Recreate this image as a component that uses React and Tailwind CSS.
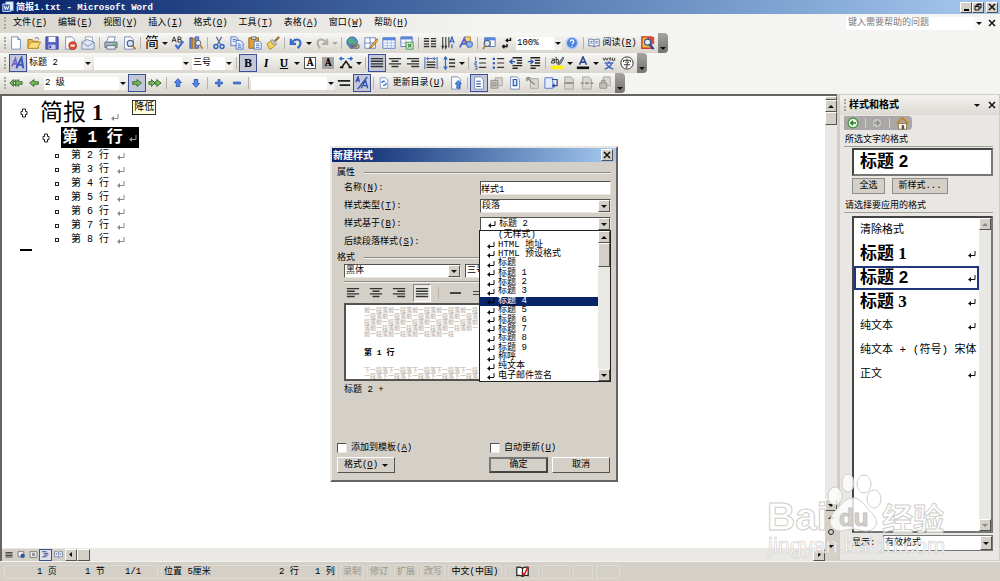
import { useState } from 'react';

const ui = "font-['Liberation_Mono','Noto_Sans_CJK_SC',monospace]";

const raised = 'border border-t-white border-l-white border-r-[#55534f] border-b-[#55534f] bg-[#d4d0c8]';
const sunken = 'border border-t-[#55534f] border-l-[#55534f] border-r-[#e8e6e0] border-b-[#e8e6e0] bg-white';

const page = <path d="M3 1h7l3 3v11H3z" fill="#fff" stroke="#6d86b8" />;
const grayPage = <path d="M3 1h7l3 3v11H3z" fill="#d8d6d0" stroke="#a5a29a" />;

const icons = {
  word: (
    <>
      <path d="M5 1h10v12H5z" fill="#e8f0fc" stroke="#7f9fd4" />
      <path d="M1 4h10v10H1z" fill="#2b5fb8" stroke="#fff" />
      <path d="M3 6.500l1.500 5 1.500-4 1.500 4 1.500-5" fill="none" stroke="#fff" strokeWidth="1.300" />
    </>
  ),
  blank: <>{page}<path d="M10 1v3h3" fill="#c3d2ee" stroke="#6d86b8" /></>,
  open: (
    <>
      <path d="M1 4h5l1 2h6v8H1z" fill="#e9b543" stroke="#a9781c" />
      <path d="M4 7h11.500L12 14H1z" fill="#fbdc7c" stroke="#b88a28" />
      <path d="M9 3c2-2 4-1 4.500 1" fill="none" stroke="#555" />
    </>
  ),
  save: (
    <>
      <path d="M1 1h14v14H1z" fill="#5460c8" stroke="#343c90" />
      <path d="M4 1h8v6H4z" fill="#f4f6fd" />
      <path d="M4 10h8v5H4z" fill="#c9cdec" />
      <path d="M5 11h2v3H5z" fill="#343c90" />
    </>
  ),
  permission: (
    <>
      {page}
      <circle cx="11" cy="11" r="4.500" fill="#e0513a" stroke="#b03020" />
      <path d="M8.500 11h5" stroke="#fff" strokeWidth="2" />
    </>
  ),
  mail: (
    <>
      <path d="M5 1h8v8H5z" fill="#fff" stroke="#8fa0c0" />
      <path d="M1 7l6-3 8 3v8H1z" fill="#dfe7f5" stroke="#7387b0" />
      <path d="M1 7l7 5 7-5" fill="none" stroke="#7387b0" />
    </>
  ),
  print: (
    <>
      <path d="M5 1h8l-2 6H3z" fill="#fff" stroke="#6d86b8" />
      <path d="M1 7h14v6H1z" fill="#a9b4c4" stroke="#5d6b80" />
      <path d="M3 11h10v4H3z" fill="#e9edf4" stroke="#5d6b80" />
      <path d="M10 9h4v2h-4z" fill="#3cc23c" />
    </>
  ),
  preview: (
    <>
      {page}
      <circle cx="9.500" cy="8.500" r="3.500" fill="#d5e6fb" stroke="#56657c" strokeWidth="1.400" />
      <path d="M12 11l3.500 4" stroke="#b98234" strokeWidth="2" />
    </>
  ),
  spell: (
    <>
      <path d="M1 7l2.500-6L6 7M2 5h3M8 1v6h2q2 0 2-1.500T10 4H8h2q1.500 0 1.500-1.500T10 1z" fill="none" stroke="#222" />
      <path d="M5 10l3 4 6-8" fill="none" stroke="#3d6fd6" strokeWidth="2.400" />
    </>
  ),
  research: (
    <>
      <path d="M1 2h3v12H1z" fill="#6d83d0" stroke="#44559c" />
      <path d="M4 3h3v11H4z" fill="#e2a950" stroke="#a87725" />
      <path d="M7 1h4v13H7z" fill="#7a9ce0" stroke="#44559c" />
      <circle cx="10.500" cy="8" r="3" fill="#e6f0fc" stroke="#555" />
      <path d="M12.500 10l3 4.500" stroke="#b98234" strokeWidth="2" />
    </>
  ),
  cut: (
    <>
      <path d="M5 1l5 9M11 1L6 10" stroke="#5c7292" strokeWidth="1.500" />
      <circle cx="4.500" cy="12" r="2.200" fill="none" stroke="#2f62c4" strokeWidth="1.700" />
      <circle cx="11.500" cy="12" r="2.200" fill="none" stroke="#2f62c4" strokeWidth="1.700" />
    </>
  ),
  copy: (
    <>
      <path d="M1 1h6l2 2v8H1z" fill="#e5edfc" stroke="#4a6ec0" />
      <path d="M7 5h5l3 3v7H7z" fill="#e5edfc" stroke="#4a6ec0" />
      <path d="M3 4h4M3 6h3M9 9h3M9 11h4M9 13h4" stroke="#4a6ec0" />
    </>
  ),
  paste: (
    <>
      <path d="M1 2h11v12H1z" fill="#e0a23c" stroke="#8e5e12" />
      <path d="M4 1h5v3H4z" fill="#ddd" stroke="#666" />
      <path d="M7 6h6l2 2v7H7z" fill="#fff" stroke="#4a6ec0" />
      <path d="M9 9h4M9 11h4M9 13h4" stroke="#4a6ec0" />
    </>
  ),
  brush: (
    <>
      <path d="M15 1l-5 5" stroke="#a0703a" strokeWidth="2.500" />
      <path d="M7 4l5 5-2 2-5-5z" fill="#ccd" stroke="#777" />
      <path d="M5 6l5 5q-3 4-6 4L1 9z" fill="#f1d25c" stroke="#a58a20" />
    </>
  ),
  undo: <path d="M2 3v6h6M3 8q4-6 9-3 3 4-2 9" fill="none" stroke="#3566cc" strokeWidth="2.300" />,
  redo: <path d="M14 3v6H8M13 8Q9 2 4 5q-3 4 2 9" fill="none" stroke="#b1afa9" strokeWidth="2.300" />,
  link: (
    <>
      <circle cx="7" cy="7" r="6" fill="#4d8fe0" stroke="#2b5ea8" />
      <path d="M3 4q3-3 5 0t-2 4-3 0zM9 7l3-1v4l-3 1z" fill="#5ab552" />
      <path d="M6 12h3m1 0h3" stroke="#555" strokeWidth="1" />
      <rect x="4" y="10" width="6" height="4" rx="2" fill="none" stroke="#777" strokeWidth="1.500" />
      <rect x="9" y="10" width="6" height="4" rx="2" fill="none" stroke="#777" strokeWidth="1.500" />
    </>
  ),
  borders: (
    <>
      <path d="M1 2h12v12H1zM1 8h12M7 2v12" fill="#fff" stroke="#5c7dc0" />
      <path d="M15 3l-7 8-2 3 3-1 7-8z" fill="#eeb448" stroke="#9a6b1a" />
    </>
  ),
  table: (
    <>
      <path d="M1 2h14v12H1z" fill="#fff" stroke="#4a70c4" />
      <path d="M1 2h14v3H1z" fill="#5b86dc" />
      <path d="M1 8h14M1 11h14M6 5v9M10.500 5v9" stroke="#9fb6e4" />
    </>
  ),
  excel: (
    <>
      <path d="M1 1h13v11H1z" fill="#fff" stroke="#4a70c4" />
      <path d="M1 1h13v3H1z" fill="#5b86dc" />
      <path d="M1 8h13M6 4v8" stroke="#9fb6e4" />
      <path d="M7 7h8v8H7z" fill="#e6f5e2" stroke="#3b8c3b" />
      <path d="M9 9l4 4M13 9l-4 4" stroke="#2f8a2f" strokeWidth="1.600" />
    </>
  ),
  columns: <path d="M1 3h6M1 6h6M1 9h6M1 12h6M9 3h6M9 6h6M9 9h6M9 12h6" stroke="#333" strokeWidth="1.600" />,
  textdir: (
    <>
      <path d="M2 1v12M5.500 1v12M9 1v12M1 11l1 3 1-3M4.500 11l1 3 1-3" stroke="#333" strokeWidth="1.200" fill="none" />
      <path d="M10 8l2.500-7L15 8M11 6h3M12.500 9v5" fill="none" stroke="#2f5cb8" strokeWidth="1.300" />
    </>
  ),
  drawing: (
    <>
      <path d="M6 1h7v6H6z" fill="#f5d478" stroke="#a8822c" />
      <path d="M1 13L6 3l5 10M3 9h6" fill="none" stroke="#5a63c8" strokeWidth="2.200" />
      <circle cx="12" cy="9.500" r="3.500" fill="#8fb0ee" stroke="#3f63b0" />
    </>
  ),
  docmap: (
    <>
      <path d="M3 2h12v10H3z" fill="#fff" stroke="#4a70c4" />
      <path d="M3 2h12v3H3z" fill="#5b86dc" />
      <circle cx="6" cy="8.500" r="3.500" fill="#d5e6fb" stroke="#56657c" strokeWidth="1.400" />
      <path d="M4 11l-3 4" stroke="#b98234" strokeWidth="2" />
    </>
  ),
  marks: <path d="M12 2v3H8M9 3L7 5l2 2M8 9v3H4M5 10l-2 2 2 2" fill="none" stroke="#111" strokeWidth="1.600" />,
  help: (
    <>
      <circle cx="8" cy="8" r="6.500" fill="#4b83e0" stroke="#b7cdf5" strokeWidth="1.500" />
      <path d="M6 6.500Q6 4.500 8 4.500t2 2Q10 8 8 9M8 11v1.300" fill="none" stroke="#fff" strokeWidth="1.600" />
    </>
  ),
  book: <path d="M8 4Q5 2 1 3v9q4-1 7 1 3-2 7-1V3q-4-1-7 1v9M3 6h3M3 8h3M10 6h3M10 8h3" fill="#eef3fd" stroke="#4b5f8c" />,
  lookup: (
    <>
      <path d="M1 1h11v13H1z" fill="#f0c23a" stroke="#d0392b" strokeWidth="1.600" />
      <path d="M7 1h8v8H7z" fill="#d94a3e" />
      <circle cx="7.500" cy="7" r="3.500" fill="#e4effc" stroke="#37558f" strokeWidth="1.300" />
      <path d="M10 10l4.500 5" stroke="#2746a0" strokeWidth="2.500" />
    </>
  ),
  styles: (
    <>
      <path d="M1 12L5 3l2 9M3 9h4" fill="none" stroke="#7160c4" strokeWidth="1.800" />
      <path d="M6 14l6-12 2 12M8 10h6" fill="none" stroke="#3a57b8" strokeWidth="2.200" />
    </>
  ),
  scale: (
    <>
      <path d="M3 13l5-7 5 7M1 13h4M11 13h4" fill="none" stroke="#111" strokeWidth="1.800" />
      <path d="M1 3h5M10 3h5M3 1L1 3l2 2M13 1l2 2-2 2" fill="none" stroke="#2c6ad0" strokeWidth="1.500" />
    </>
  ),
  justify: <path d="M1 3h14M1 6h14M1 9h14M1 12h14" stroke="#333" strokeWidth="1.700" />,
  left: <path d="M1 3h14M1 6h9M1 9h14M1 12h9" stroke="#333" strokeWidth="1.700" />,
  center: <path d="M1 3h14M4 6h8M1 9h14M4 12h8" stroke="#333" strokeWidth="1.700" />,
  right: <path d="M1 3h14M6 6h9M1 9h14M6 12h9" stroke="#333" strokeWidth="1.700" />,
  distribute: (
    <>
      <path d="M3 7h10M3 10h10M3 13h10" stroke="#333" strokeWidth="1.700" />
      <path d="M1 1v14M15 1v14M3 3h10M5 1L3 3l2 2M11 1l2 2-2 2" fill="none" stroke="#2c58b8" />
    </>
  ),
  spacing: (
    <>
      <path d="M8 4h7M8 8h7M8 12h7" stroke="#333" strokeWidth="1.600" />
      <path d="M4 2v12M2 4l2-3 2 3M2 12l2 3 2-3" fill="none" stroke="#2c6ad0" strokeWidth="1.400" />
    </>
  ),
  numbers: (
    <>
      <path d="M7 3h8M7 8h8M7 13h8" stroke="#333" strokeWidth="1.400" />
      <path d="M3 1v4M2 6.500h2v1.500H2v2h2.500M2 12h2.500v3H2" fill="none" stroke="#2c58b8" />
    </>
  ),
  bullets: (
    <>
      <path d="M7 3h8M7 8h8M7 13h8" stroke="#333" strokeWidth="1.400" />
      <path d="M2 2h2.500v2.500H2zM2 7h2.500v2.500H2zM2 12h2.500v2.500H2z" fill="#2c58b8" />
    </>
  ),
  outdent: (
    <>
      <path d="M4 2h11M9 5h6M9 8h6M4 11h11M4 14h6" stroke="#222" strokeWidth="1.600" />
      <path d="M7 6.500H1M4 4L1 6.500 4 9" fill="none" stroke="#2c58b8" strokeWidth="1.500" />
    </>
  ),
  indent: (
    <>
      <path d="M4 2h11M9 5h6M9 8h6M4 11h11M4 14h6" stroke="#222" strokeWidth="1.600" />
      <path d="M1 6.500h6M4 4l3 2.500L4 9" fill="none" stroke="#2c58b8" strokeWidth="1.500" />
    </>
  ),
  highlight: (
    <>
      <path d="M1 11h14v4H1z" fill="#fff200" />
      <path d="M5 5H2.500L1.500 8H5V3.500H2M7 1v7h2.500V4H7" fill="none" stroke="#222" />
      <path d="M15 1l-5 7-1 2 3-1 4-7z" fill="#7b9be0" stroke="#555" />
    </>
  ),
  fontcolor: (
    <>
      <path d="M1 12h14v3H1z" fill="#111" />
      <path d="M4 10l4-9 4 9M5.500 7h5" fill="none" stroke="#2d4a94" strokeWidth="1.800" />
    </>
  ),
  pinyin: (
    <>
      <path d="M1 2l1.500 3L4 2l1.500 3L7 2M9 5q-2-3 1-3v3M12 2v3h2.500V2" fill="none" stroke="#333" />
      <path d="M3 8h10M8 6v2M5 9q2 4 8 6M11 9q-2 4-8 6" fill="none" stroke="#3f63c0" strokeWidth="1.500" />
    </>
  ),
  circled: (
    <>
      <circle cx="8" cy="8" r="7" fill="#fff" stroke="#222" />
      <path d="M4 5h8M4 5v2M12 5v2M8 3v2M6 7h4L8 9v4H6.500M4.500 10h7" fill="none" stroke="#222" />
    </>
  ),
  promote2: <path d="M1 8l4-4v2.500h3V4L4.500 8 8 12V9.500H5V12zM7 8l4-4v2.500h4v3h-4V12z" fill="#7cb85c" stroke="#2f6a2a" />,
  promote: <path d="M3 8l5-4v2.500h5v3H8V12z" fill="#7cb85c" stroke="#2f6a2a" />,
  demote: <path d="M13 8L8 4v2.500H3v3h5V12z" fill="#7cb85c" stroke="#2f6a2a" />,
  body: <path d="M1 6.500h3V4l4 4-4 4V9.500H1zM8 6.500h2V4l5 4-5 4V9.500H8z" fill="#7cb85c" stroke="#2f6a2a" />,
  up: <path d="M8 3L4 7.500h2V12h4V7.500h2z" fill="#4f88ee" stroke="#2857b4" />,
  down: <path d="M8 13L4 8.500h2V4h4v4.500h2z" fill="#4f88ee" stroke="#2857b4" />,
  plus: <path d="M7 4h2v3h3v2H9v3H7V9H4V7h3z" fill="#4f88ee" stroke="#2857b4" />,
  minus: <path d="M4 7h8v2H4z" fill="#4f88ee" stroke="#2857b4" />,
  firstline: <path d="M1 5.500h14M3 10.500h12" stroke="#222" strokeWidth="2" />,
  showformat: <path d="M1 7l2.500-6L5 7M2 5h3M14 1L3 15M7 14l5-9 2.500 9M9 11h5" fill="none" stroke="#2f4ca8" strokeWidth="1.500" />,
  refresh: <>{page}<path d="M5 8q1-3 4-2M11 8q-1 4-4 3" fill="none" stroke="#2c6ad0" strokeWidth="1.800" /></>,
  gototoc: <>{page}<path d="M9 14V9H7l3.500-4L14 9h-2v5z" fill="#5a90ee" stroke="#2857b4" /></>,
  master: <>{page}<path d="M5 6h5M5 9h5M5 12h5" stroke="#2c58b8" strokeWidth="1.400" /></>,
  collapse: <><path d="M6 2h8v9H6z" fill="#d8d6d0" stroke="#a5a29a" /><path d="M1 5h8v9H1zM3 8h4v3H3z" fill="#c4c1ba" stroke="#908d86" /></>,
  subdoc: <>{page}<path d="M6 4h4v7H6z" fill="#d6e4fb" stroke="#2c58b8" strokeWidth="1.400" /></>,
  remove: <><path d="M5 3h9v11H5z" fill="#d8d6d0" stroke="#a5a29a" /><path d="M1 2l9 8M1 2v4M1 2h4" stroke="#908d86" strokeWidth="1.600" /></>,
  insertdoc: <><path d="M1 2h9v12H1z" fill="#e5edfc" stroke="#4a6ec0" /><path d="M9 4h6v7h-4M12 9l-2 2 2 2" fill="none" stroke="#2b4da0" strokeWidth="1.400" /></>,
  merge: <>{grayPage}<path d="M3 8h10" stroke="#908d86" strokeWidth="2" /></>,
  split: <>{grayPage}<path d="M1 8h3M6 8h4M12 8h3" stroke="#908d86" strokeWidth="2" /></>,
  lock: <><path d="M6 1h8v10H6z" fill="#d8d6d0" stroke="#a5a29a" /><path d="M2 8h8v6H2zM4 8V5h4v3" fill="#c4c1ba" stroke="#908d86" /></>,
  spellcheck: (
    <>
      <path d="M8 4Q5 2 1 3v10q4-1 7 1 3-2 7-1V3q-4-1-7 1v10" fill="#fff" stroke="#222" strokeWidth="1.500" />
      <path d="M7 9l3 3 5-10" fill="none" stroke="#d01818" strokeWidth="2" />
    </>
  ),
  back: <><circle cx="8" cy="8" r="6.500" fill="#e9f7e4" stroke="#3a8a34" strokeWidth="1.500" /><path d="M12 8H5M8 5L5 8l3 3" fill="none" stroke="#2c7a28" strokeWidth="2" /></>,
  forward: <><circle cx="8" cy="8" r="6.500" fill="#c5c4c0" stroke="#9a9994" /><path d="M4 8h7M8 5l3 3-3 3" fill="none" stroke="#8d8c88" strokeWidth="1.800" /></>,
  home: (
    <>
      <path d="M3 8h10v7H3z" fill="#fffbe8" stroke="#7a6a4a" />
      <path d="M1 8l7-7 7 7" fill="none" stroke="#c88422" strokeWidth="2.200" />
      <path d="M7 10h3v5H7z" fill="#6a5238" />
    </>
  ),
  viewWeb: <><path d="M2 3h10v9H2z" fill="#fff" stroke="#333" /><circle cx="10" cy="10" r="4" fill="#2f5a96" /></>,
  viewPrint: <path d="M2 3h12v10H2zM5 6h6M5 8h6M5 10h6" fill="#fff" stroke="#333" />,
  viewOutline: <path d="M2 3h8M5 6h8M5 9h8M2 12h8" stroke="#2b3e7a" strokeWidth="1.500" />,
};

function Icon({ name, size = 14 }) {
  return (
    <svg width={size} height={size} viewBox="0 0 16 16" className="shrink-0" aria-hidden="true">
      {icons[name]}
    </svg>
  );
}

function Caret({ dir = 'down', color = '#111' }) {
  const shapes = { down: 'M0 1h6L3 4z', up: 'M0 4h6L3 1z', left: 'M4 0v5L1 2.500z', right: 'M2 0v5l3-2.500z' };
  return (
    <svg width="6" height="5" viewBox="0 0 6 5" className="shrink-0" aria-hidden="true">
      <path d={shapes[dir]} fill={color} />
    </svg>
  );
}

function Return({ color = '#111' }) {
  return (
    <svg width="8" height="8" viewBox="0 0 8 8" className="shrink-0" aria-hidden="true">
      <path d="M7 1v4.500H2" fill="none" stroke={color} />
      <path d="M0 5.500L3 3v5z" fill={color} />
    </svg>
  );
}

function Cross() {
  return (
    <svg width="8" height="8" viewBox="0 0 8 8" aria-hidden="true">
      <path d="M1 1l6 6M7 1L1 7" stroke="#111" strokeWidth="1.500" />
    </svg>
  );
}

function Tool({ name, label, active, children }) {
  return (
    <button
      aria-label={label || name}
      className={`flex h-[18px] w-[18px] shrink-0 items-center justify-center ${active ? 'border border-[#3a4f94] bg-[#c3c7d8]' : ''}`}
    >
      {children || <Icon name={name} />}
    </button>
  );
}

function More({ color }) {
  return (
    <button aria-label="更多" className="flex w-2 shrink-0 items-center justify-center">
      <Caret color={color} />
    </button>
  );
}

function Sep() {
  return <span className="mx-[2px] h-3 w-px shrink-0 bg-[#b5b2aa]" />;
}

function Grip() {
  return <span className="mr-px ml-1 h-3 w-[2px] shrink-0 border-l-2 border-dotted border-[#a9a69e]" />;
}

function Tools({ names }) {
  return names.map((n) => <Tool key={n} name={n} />);
}

function Combo({ label, value, className, flat = true }) {
  return (
    <span className={`flex shrink-0 items-center bg-white ${className}`}>
      <select aria-label={label} defaultValue={value} className="h-full min-w-0 flex-1 appearance-none pl-px outline-none">
        <option>{value}</option>
      </select>
      <span className={`pointer-events-none flex h-full items-center justify-center ${flat ? 'w-2 bg-[#f0efec]' : `w-3 ${raised}`}`}>
        <Caret />
      </span>
    </span>
  );
}

function Toolbar({ label, children }) {
  return (
    <div role="toolbar" aria-label={label} className="flex h-5 w-fit items-center rounded-r-sm bg-linear-to-b from-[#f8f8f6] to-[#d9d6ce]">
      {children}
      <button aria-label="工具栏选项" className="ml-px flex h-5 w-[10px] shrink-0 items-end justify-center rounded-r-sm bg-linear-to-b from-[#a5a4a1] to-[#757470] pb-[2px]">
        <Caret />
      </button>
    </div>
  );
}

function Key({ children, k, end = '' }) {
  return <span>{children}(<u>{k}</u>){end}</span>;
}

const menus = [
  ['文件', 'F'], ['编辑', 'E'], ['视图', 'V'], ['插入', 'I'], ['格式', 'O'],
  ['工具', 'T'], ['表格', 'A'], ['窗口', 'W'], ['帮助', 'H'],
];

function TitleBar() {
  return (
    <header className="flex h-[14px] shrink-0 items-center bg-linear-to-r from-[#0a246a] to-[#a6caf0] pr-[2px] pl-[2px]">
      <Icon name="word" size={12} />
      <h1 className="ml-[2px] flex-1 pt-[2px] text-[9px] leading-3 font-bold text-white">简报1.txt - Microsoft Word</h1>
      <button aria-label="最小化" className={`flex h-[11px] w-3 items-end justify-center pb-px ${raised}`}>
        <span className="h-[2px] w-[5px] bg-black" />
      </button>
      <button aria-label="还原" className={`flex h-[11px] w-3 items-center justify-center ${raised}`}>
        <svg width="8" height="8" viewBox="0 0 8 8"><path d="M3 3V1h4v4H5M1 3h4v4H1zM1 3.500h4M3 1.500h4" fill="none" stroke="#111" /></svg>
      </button>
      <button aria-label="关闭" className={`ml-[2px] flex h-[11px] w-3 items-center justify-center ${raised}`}><Cross /></button>
    </header>
  );
}

function MenuBar() {
  return (
    <nav className="flex h-[18px] items-center">
      <Grip />
      <div className="flex w-[412px] shrink-0 pl-[6px]">
        {menus.map(([name, k]) => (
          <button key={k} className="flex-1 text-left whitespace-nowrap"><Key k={k}>{name}</Key></button>
        ))}
      </div>
      <span className="flex-1" />
      <input aria-label="键入需要帮助的问题" placeholder="键入需要帮助的问题" className="h-[13px] w-[128px] bg-white pl-[2px] placeholder:text-[#777]" />
      <span className="flex h-[13px] w-[10px] items-center justify-center bg-[#f8f8f7]"><Caret /></span>
      <button aria-label="关闭窗口" className="mr-1 ml-1"><Cross /></button>
    </nav>
  );
}

function Toolbars() {
  return (
    <div className="flex flex-col items-start pt-px pb-px">
      <Toolbar label="常用">
        <Grip />
        <Tools names={['blank', 'open', 'save', 'permission', 'mail']} />
        <Sep />
        <Tools names={['print', 'preview']} />
        <Sep />
        <Tool label="中文简繁转换"><span className="text-[14px] leading-4">简</span></Tool>
        <More />
        <Tools names={['spell', 'research']} />
        <Sep />
        <Tools names={['cut', 'copy', 'paste', 'brush']} />
        <Sep />
        <Tool name="undo" />
        <More />
        <Tool name="redo" />
        <More color="#aaa" />
        <Sep />
        <Tools names={['link', 'borders', 'table', 'excel']} />
        <Sep />
        <Tools names={['columns', 'textdir', 'drawing']} />
        <Sep />
        <Tools names={['docmap', 'marks']} />
        <Combo label="显示比例" value="100%" className="mr-px h-[13px] w-[46px]" />
        <Tool name="help" />
        <Sep />
        <button className="flex w-[53px] items-center justify-center gap-[2px]">
          <Icon name="book" size={12} /><Key k="R">阅读</Key>
        </button>
        <Tool name="lookup" />
      </Toolbar>

      <Toolbar label="格式">
        <Grip />
        <span className="w-[2px]" />
        <Tool name="styles" active />
        <Combo label="样式" value="标题 2" className="mx-px h-[13px] w-[64px]" />
        <Combo label="字体" value="" className="mx-px h-[13px] w-[96px]" />
        <Combo label="字号" value="三号" className="mx-px h-[13px] w-[41px]" />
        <Sep />
        <Tool label="加粗" active><b className="font-serif text-[12px]">B</b></Tool>
        <Tool label="倾斜"><i className="font-serif text-[12px] font-bold">I</i></Tool>
        <Tool label="下划线"><u className="font-serif text-[12px] font-bold">U</u></Tool>
        <More />
        <Tool label="字符边框"><b className="h-3 border border-[#555] bg-white px-px font-serif text-[11px] leading-[10px]">A</b></Tool>
        <Tool label="字符底纹"><b className="h-3 bg-[#a7a6a3] px-[2px] font-serif text-[11px] leading-3">A</b></Tool>
        <Tool name="scale" />
        <More />
        <Sep />
        <Tool name="justify" active />
        <Tools names={['center', 'right', 'distribute', 'spacing']} />
        <More />
        <Sep />
        <Tools names={['numbers', 'bullets', 'outdent', 'indent']} />
        <Sep />
        <Tool name="highlight" />
        <More />
        <Tool name="fontcolor" />
        <More />
        <Tools names={['pinyin', 'circled']} />
      </Toolbar>

      <Toolbar label="大纲">
        <Grip />
        <Tools names={['promote2', 'promote']} />
        <Combo label="大纲级别" value="2 级" className="mx-px h-[13px] w-[83px]" />
        <Tool name="demote" active />
        <Tool name="body" />
        <Sep />
        <Tools names={['up', 'down']} />
        <Sep />
        <Tools names={['plus', 'minus']} />
        <Sep />
        <Combo label="显示级别" value="" className="h-[13px] w-[84px]" />
        <Tool name="firstline" />
        <Tool name="showformat" active />
        <Sep />
        <button className="flex w-[71px] items-center justify-center gap-[2px]">
          <Icon name="refresh" size={12} /><Key k="U">更新目录</Key>
        </button>
        <Tool name="gototoc" />
        <Sep />
        <Tool name="master" active />
        <Tools names={['collapse', 'subdoc', 'remove', 'insertdoc', 'merge', 'split', 'lock']} />
      </Toolbar>
    </div>
  );
}

function OutlineMark() {
  return (
    <svg width="8" height="10" viewBox="0 0 8 10" className="shrink-0" aria-hidden="true">
      <path d="M2.500 1h3v2.500H7v3H5.500V9h-3V6.500H1v-3h1.500z" fill="#fff" stroke="#222" />
    </svg>
  );
}

function Document() {
  return (
    <article className="min-h-0 flex-1 overflow-hidden bg-white pt-[3px] pl-[18px]">
      <div className="flex h-7 items-center">
        <OutlineMark />
        <h2 className="ml-3 font-['Liberation_Serif','Noto_Sans_CJK_SC',serif] text-[23px] leading-7 whitespace-pre">
          简报 <b>1</b>
        </h2>
        <span className="mt-2 ml-2"><Return color="#888" /></span>
        <span role="tooltip" className="mb-3 ml-[13px] border border-[#333] bg-[#ffffe1] px-px pt-px text-[10px] leading-3">降低</span>
      </div>
      <div className="flex h-[21px] items-center pl-[22px]">
        <OutlineMark />
        <h3 className="ml-[11px] flex h-[21px] items-center bg-black pr-[2px] pl-px text-[16px] leading-5 font-bold whitespace-pre text-white">
          第 1 行<span className="ml-[6px]"><Return color="#999" /></span>
        </h3>
      </div>
      <ul className="pt-px pl-[35px]">
        {[2, 3, 4, 5, 6, 7, 8].map((n) => (
          <li key={n} className="flex h-[14px] items-center text-[10px] leading-[14px] whitespace-pre">
            <span className="mr-3 h-1 w-1 border border-[#222]" />第 {n} 行
            <span className="ml-2"><Return color="#888" /></span>
          </li>
        ))}
      </ul>
      <div className="mt-[2px] h-[2px] w-3 bg-black" />
    </article>
  );
}

const track = 'bg-[#e9e8e4]';

function ScrollButton({ dir, color }) {
  return (
    <button aria-label={dir} className={`flex h-3 w-3 shrink-0 items-center justify-center ${raised}`}>
      <Caret dir={dir} color={color} />
    </button>
  );
}

function Workspace() {
  return (
    <main className="flex min-w-0 flex-1 border-t-2 border-l-2 border-[#66645f]">
      <div className="flex min-w-0 flex-1 flex-col">
        <Document />
        <div className={`flex h-[13px] shrink-0 items-center ${track}`}>
          <div className="flex items-center bg-[#d4d0c8]">
            <button aria-label="普通视图" className="flex h-3 w-[13px] items-center justify-center"><Icon name="justify" size={8} /></button>
            <button aria-label="Web 版式" className="flex w-3 justify-center"><Icon name="viewWeb" size={9} /></button>
            <button aria-label="页面视图" className="flex w-3 justify-center"><Icon name="viewPrint" size={9} /></button>
            <button aria-label="大纲视图" className="flex h-3 w-[13px] items-center justify-center border border-[#3a4f94] bg-[#dfe1ea]"><Icon name="viewOutline" size={9} /></button>
            <button aria-label="阅读版式" className="flex w-[13px] justify-center"><Icon name="book" size={9} /></button>
            <ScrollButton dir="left" />
            <span className={`h-3 w-[13px] ${raised}`} />
          </div>
          <span className="flex-1" />
          <ScrollButton dir="right" />
        </div>
      </div>
      <div className={`flex w-3 shrink-0 flex-col items-center ${track}`}>
        <span className={`h-1 w-3 ${raised}`} />
        <ScrollButton dir="up" />
        <span className={`h-[13px] w-3 ${raised}`} />
        <span className="flex-1" />
        <ScrollButton dir="down" />
        <div className="flex h-[50px] w-3 flex-col items-center justify-around bg-[#d4d0c8] pb-2">
          <Caret dir="up" />
          <span className="h-[6px] w-[6px] rounded-full border border-[#222]" />
          <Caret />
        </div>
      </div>
    </main>
  );
}

const styleRows = [
  { name: '清除格式' },
  { name: '标题 1', cls: "font-['Liberation_Serif','Noto_Sans_CJK_SC',serif] text-[17px] font-bold", mark: true },
  { name: '标题 2', cls: "font-['Liberation_Sans','Noto_Sans_CJK_SC',sans-serif] text-[17px] font-bold", mark: true },
  { name: '标题 3', cls: "font-['Liberation_Serif','Noto_Sans_CJK_SC',serif] text-[17px] font-bold", mark: true },
  { name: '纯文本', mark: true },
  { name: '纯文本 + (符号) 宋体' },
  { name: '正文', mark: true },
];

function StylePane() {
  const [current, setCurrent] = useState('标题 2');
  return (
    <aside className="ml-[2px] flex w-[161px] shrink-0 flex-col border border-[#cfccc4] bg-[#e8e7e4] pr-[6px] pl-1">
      <div className="-mr-[6px] -ml-1 flex h-5 shrink-0 items-center bg-linear-to-b from-[#f3f2f0] to-[#dddad3] pr-[3px]">
        <Grip />
        <h2 className="ml-[2px] flex-1 pt-[2px] text-[10px] font-bold">样式和格式</h2>
        <Caret />
        <button aria-label="关闭任务窗格" className="ml-2"><Cross /></button>
      </div>
      <div className="mt-px flex h-[14px] w-[68px] shrink-0 items-center justify-around rounded-r bg-[#a9a8a6]">
        <button aria-label="后退"><Icon name="back" size={12} /></button>
        <span className="h-[10px] w-px bg-[#d0cfcc]" />
        <button aria-label="前进"><Icon name="forward" size={12} /></button>
        <span className="h-[10px] w-px bg-[#d0cfcc]" />
        <button aria-label="开始"><Icon name="home" size={13} /></button>
      </div>
      <h3 className="mt-[5px] border-b border-[#a09e98] pl-px leading-[11px]">所选文字的格式</h3>
      <div className="mt-px ml-2 flex h-7 shrink-0 items-center border-2 border-[#444] border-r-[#777] border-b-[#777] bg-white pl-[6px] font-['Liberation_Sans','Noto_Sans_CJK_SC',sans-serif] text-[17px] leading-6 font-bold">
        标题 2
      </div>
      <div className="mt-[2px] ml-2 flex gap-[7px]">
        <button className="h-4 w-[33px] border border-[#8f8c85] bg-[#d4d0c8]">全选</button>
        <button className="h-4 w-[56px] border border-[#8f8c85] bg-[#d4d0c8]">新样式...</button>
      </div>
      <h3 className="mt-[7px] border-b border-[#a09e98] pl-px leading-[11px]">请选择要应用的格式</h3>
      <div className="mt-[3px] ml-2 flex min-h-0 flex-1 border-2 border-[#444] border-r-[#777] border-b-[#777] bg-white">
        <ul className="min-w-0 flex-1">
          {styleRows.map((row) => (
            <li key={row.name}>
              <button
                onClick={() => setCurrent(row.name)}
                className={`flex h-6 w-full items-center border-2 pr-px pl-1 text-left ${current === row.name ? 'border-[#1f3679]' : 'border-transparent'}`}
              >
                <span className={`flex-1 leading-6 whitespace-nowrap ${row.cls || 'text-[11px]'}`}>{row.name}</span>
                {row.mark && <Return />}
              </button>
            </li>
          ))}
        </ul>
        <div className={`flex w-3 flex-col justify-between ${track}`}>
          <ScrollButton dir="up" color="#888" />
          <ScrollButton dir="down" color="#888" />
        </div>
      </div>
      <label className="mt-[2px] mb-[9px] ml-2 flex h-4 shrink-0 items-center justify-between">
        显示:
        <Combo label="显示" value="有效格式" flat={false} className="h-4 w-[110px] border border-[#777]" />
      </label>
    </aside>
  );
}

function Cell({ className = '', children }) {
  return <span className={`flex h-[14px] shrink-0 items-center border border-[#dedbd4] whitespace-pre ${className}`}>{children}</span>;
}

function StatusBar() {
  return (
    <footer className="flex h-5 shrink-0 items-center gap-[3px] border-t border-[#f4f3f0] bg-[#d4d0c8] pl-1 text-[9px]">
      <Cell className="w-[154px] pl-8">
        <span className="w-12">1 页</span>
        <span className="w-10">1 节</span>
        <span>1/1</span>
      </Cell>
      <Cell className="w-[176px] pl-[2px]">
        <span className="w-[115px]">位置 5厘米</span>
        <span className="w-9">2 行</span>
        <span>1 列</span>
      </Cell>
      {['录制', '修订', '扩展', '改写'].map((t) => (
        <Cell key={t} className="w-6 justify-center text-[#9a978f]">{t}</Cell>
      ))}
      <Cell className="w-[54px] justify-center">中文(中国)</Cell>
      <Cell className="w-[34px] justify-center"><Icon name="spellcheck" size={13} /></Cell>
      <Cell className="w-7" />
      <Cell className="w-5" />
      <Cell className="w-6" />
    </footer>
  );
}

const baseStyles = [
  '(无样式)', 'HTML 地址', 'HTML 预设格式', '标题', '标题 1', '标题 2', '标题 3', '标题 4',
  '标题 5', '标题 6', '标题 7', '标题 8', '标题 9', '称呼', '纯文本', '电子邮件签名',
];

function Legend({ children }) {
  return (
    <div className="flex h-[13px] items-center gap-[9px] px-[5px]">
      {children}
      <span className="h-[2px] flex-1 border-t border-b border-t-[#8c8a84] border-b-[#f2f1ee]" />
    </div>
  );
}

function Row({ label, k, children }) {
  return (
    <label className="flex h-[18px] items-center pr-[5px] pl-3">
      <span className="w-[136px] whitespace-nowrap"><Key k={k} end=":">{label}</Key></span>
      {children}
    </label>
  );
}

function Preview() {
  return (
    <div className="mx-3 mr-[6px] h-[78px] overflow-hidden border-2 border-[#55534f] bg-white pt-[3px] pl-[18px] text-[6px] leading-[6px] whitespace-nowrap text-[#aaa]">
      <p>前一段落前一段落前一段落前一段落前一段</p>
      <p>一段落前一段落前一段落前一段落前一段落</p>
      <p>段落前一段落前一段落前一段落前一段落前</p>
      <p>落前一段落前一段落前一段落前一段落前一</p>
      <p>前一段落前一段落前一段落前一段</p>
      <p className="my-[11px] text-[8px] leading-[8px] font-bold text-black">第 1 行</p>
      <p>下一段落下一段落下一段落下一段落下一段</p>
      <p>一段落下一段落下一段落下一段落下一段落</p>
    </div>
  );
}

function NewStyleDialog({ onClose }) {
  const [base, setBase] = useState('标题 4');
  return (
    <section
      role="dialog"
      aria-label="新建样式"
      className="absolute top-[146px] left-[330px] flex w-[288px] flex-col border-2 border-t-[#e9e7e2] border-r-[#66645f] border-b-[#66645f] border-l-[#e9e7e2] bg-[#d4d0c8]"
    >
      <div className="flex h-[14px] items-center bg-linear-to-r from-[#0a246a] to-[#a6caf0] pr-[3px] pl-px">
        <h2 className="flex-1 pt-[3px] text-[10px] leading-[14px] font-bold text-white">新建样式</h2>
        <button aria-label="关闭" onClick={onClose} className={`flex h-3 w-3 items-center justify-center ${raised}`}><Cross /></button>
      </div>

      <div className="pt-1"><Legend>属性</Legend></div>
      <Row label="名称" k="N">
        <input defaultValue="样式1" className={`h-[14px] min-w-0 flex-1 ${sunken}`} />
      </Row>
      <Row label="样式类型" k="T">
        <Combo label="样式类型" value="段落" flat={false} className={`h-[14px] flex-1 ${sunken}`} />
      </Row>
      <div className="relative">
        <Row label="样式基于" k="B">
          <span className={`flex h-[14px] flex-1 items-center pl-[7px] ${sunken}`}>
            <Return />
            <select aria-label="样式基于" defaultValue="标题 2" className="ml-[3px] min-w-0 flex-1 appearance-none outline-none">
              <option>标题 2</option>
            </select>
            <span className={`flex h-full w-3 items-center justify-center ${raised}`}><Caret /></span>
          </span>
        </Row>
        <div className="absolute top-[15px] right-[5px] z-10 flex h-[152px] w-[132px] border border-[#222] bg-white">
          <ul role="listbox" aria-label="样式基于" className="flex min-w-0 flex-1 flex-col">
            {baseStyles.map((s, i) => (
              <li
                key={s}
                role="option"
                aria-selected={s === base}
                onClick={() => setBase(s)}
                className={`flex min-h-0 flex-1 items-center gap-[3px] pl-[7px] leading-[9px] whitespace-pre ${s === base ? 'bg-[#0a246a] text-white' : ''}`}
              >
                {i > 0 ? <Return color={s === base ? '#000' : '#111'} /> : <span className="w-2" />}
                {s}
              </li>
            ))}
          </ul>
          <div className={`flex w-3 flex-col ${track}`}>
            <ScrollButton dir="up" />
            <span className={`h-6 w-3 ${raised}`} />
            <span className="flex-1" />
            <ScrollButton dir="down" />
          </div>
        </div>
      </div>
      <Row label="后续段落样式" k="S" />

      <Legend>格式</Legend>
      <div className="flex gap-1 pl-3">
        <Combo label="字体" value="黑体" flat={false} className={`h-[14px] w-[117px] ${sunken}`} />
        <Combo label="字号" value="三号" flat={false} className={`h-[14px] w-12 ${sunken}`} />
      </div>
      <div className="mx-3 mt-[3px] mr-[6px] h-[2px] border-t border-b border-t-[#8c8a84] border-b-[#f2f1ee]" />
      <div className="flex h-5 items-center gap-[5px] pl-3">
        <Tool name="left" />
        <Tool name="center" />
        <Tool name="right" />
        <button aria-label="两端对齐" className="flex h-[18px] w-[18px] items-center justify-center border border-t-[#888] border-r-white border-b-white border-l-[#888] bg-[#e9e7e3]">
          <Icon name="justify" />
        </button>
        <Sep />
        <Tool label="单倍行距"><span className="h-[2px] w-[11px] bg-[#444]" /></Tool>
        <Tool label="1.5 倍行距"><span className="h-1 w-[11px] border-t border-b border-[#444]" /></Tool>
      </div>
      <Preview />
      <p className="h-[59px] pt-[3px] pl-3">标题 2 +</p>

      <div className="flex h-4 items-center px-[5px]">
        <label className="flex w-[153px] items-center gap-1">
          <input type="checkbox" className={`h-[10px] w-[10px] appearance-none ${sunken}`} /><Key k="A">添加到模板</Key>
        </label>
        <label className="flex items-center gap-1">
          <input type="checkbox" className={`h-[10px] w-[10px] appearance-none ${sunken}`} /><Key k="U">自动更新</Key>
        </label>
      </div>
      <div className="flex items-center pt-px pr-[6px] pb-[7px] pl-[5px]">
        <button className={`flex h-4 w-[58px] items-center justify-center gap-1 ${raised}`}>
          <Key k="O">格式</Key><Caret />
        </button>
        <span className="flex-1" />
        <button onClick={onClose} className="h-4 w-[59px] border-2 border-[#444] border-t-[#777] border-l-[#777] bg-[#d4d0c8] leading-3">确定</button>
        <button onClick={onClose} className={`ml-1 h-4 w-[58px] ${raised}`}>取消</button>
      </div>
    </section>
  );
}

function Watermark() {
  return (
    <svg
      width="190"
      height="94"
      viewBox="0 0 190 94"
      className="pointer-events-none absolute right-[46px] bottom-[18px]"
      fill="#fff"
      fillOpacity="0.8"
      stroke="#cfcecb"
      strokeWidth="1"
      fontFamily="'Liberation Sans', 'Noto Sans CJK SC', sans-serif"
    >
      <ellipse cx="71" cy="27" rx="7" ry="9" />
      <ellipse cx="84" cy="14" rx="6" ry="9" />
      <ellipse cx="100" cy="15" rx="7" ry="9" />
      <ellipse cx="110" cy="30" rx="7" ry="9" />
      <path d="M89 29c8 0 11 7 17 13 10 9 8 19-4 20-6 0-9-2-13-2s-8 2-13 2c-11-1-13-12-5-20 7-7 10-13 18-13z" />
      <text x="3" y="61" fontSize="39" fontWeight="bold">Bai</text>
      <text x="75" y="57" fontSize="24" fontWeight="bold" fill="#d2d2d0" fillOpacity="1" stroke="#c4c3c0">du</text>
      <text x="118" y="61" fontSize="31" fontWeight="bold">经验</text>
      <text x="4" y="84" fontSize="22" strokeWidth="0.600">jingyan.baidu.com</text>
    </svg>
  );
}

export default function App() {
  const [dialogOpen, setDialogOpen] = useState(true);
  return (
    <div lang="zh-CN" className={`relative flex h-screen flex-col overflow-hidden bg-[#d4d0c8] text-[9px] leading-3 text-black ${ui}`}>
      <TitleBar />
      <div className="shrink-0 bg-linear-to-r from-[#d9d6ce] via-[#f4f4f2] via-50% to-[#f4f4f2]">
        <MenuBar />
        <Toolbars />
      </div>
      <div className="flex min-h-0 flex-1">
        <Workspace />
        <StylePane />
      </div>
      <StatusBar />
      {dialogOpen && <NewStyleDialog onClose={() => setDialogOpen(false)} />}
      <Watermark />
    </div>
  );
}
